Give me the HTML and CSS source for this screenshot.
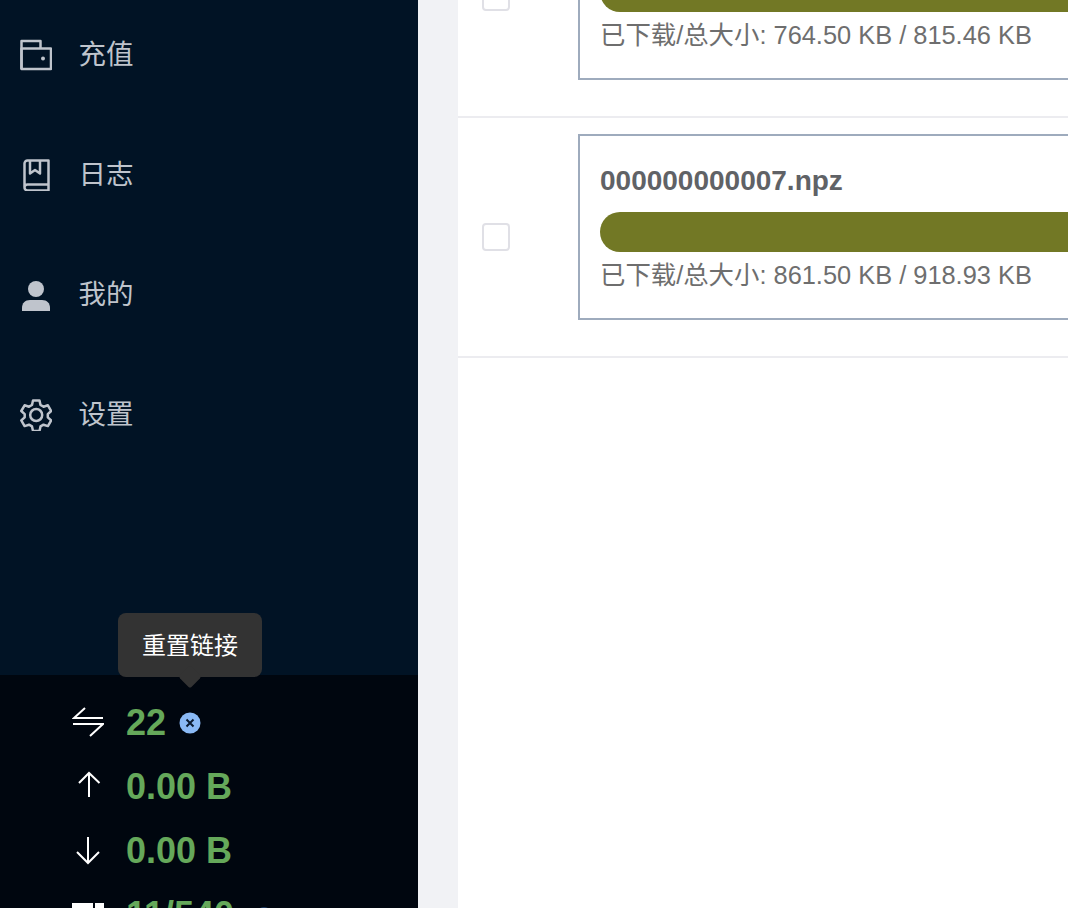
FILE: index.html
```html
<!DOCTYPE html>
<html lang="zh">
<head>
<meta charset="utf-8">
<title>下载</title>
<link rel="stylesheet" href="styles.css">
</head>
<body>
<div class="app">
  <aside class="sidebar">
    <nav class="menu">
      <a class="menu-item">
        <svg class="menu-icon" viewBox="0 0 32 32" fill="none" stroke="currentColor" stroke-width="2.500" stroke-linejoin="round"><path d="M1.500 30V2H20.500V9.500"/><path d="M1.500 9.500H31V30H1.500z"/><circle cx="23" cy="19.500" r="2" fill="currentColor" stroke="none"/></svg>
        <span class="menu-label">充值</span>
      </a>
      <a class="menu-item">
        <svg class="menu-icon" viewBox="0 0 32 32" fill="none" stroke="currentColor" stroke-width="2.500" stroke-linejoin="round"><path d="M4.500 28V4.500a3 3 0 0 1 3-3H28.500V31.500H7.500a3 3 0 0 1-3-3a3 3 0 0 1 3-3H28.500"/><path d="M10 1.500V14.500L15 11l5 3.500V1.500"/></svg>
        <span class="menu-label">日志</span>
      </a>
      <a class="menu-item">
        <svg class="menu-icon" viewBox="0 0 32 32" fill="currentColor"><circle cx="16" cy="10" r="8"/><path d="M2 32v-3c0-5 3-8 8-8h12c5 0 8 3 8 8v3z"/></svg>
        <span class="menu-label">我的</span>
      </a>
      <a class="menu-item">
        <svg class="menu-icon" viewBox="0 0 32 32" fill="none" stroke="currentColor" stroke-width="2.500" stroke-linejoin="round"><path d="M13 1.500h6.500l1 4.500 3 1.700 4.400-1.400 3.300 5.700-3.400 3.100v3.200l3.400 3.100-3.300 5.700-4.400-1.400-3 1.700-1 4.500H13l-1-4.500-3-1.700-4.400 1.400-3.300-5.700 3.400-3.100v-3.200L1.300 12l3.300-5.700L9 7.700l3-1.700z"/><circle cx="16.200" cy="16" r="6"/></svg>
        <span class="menu-label">设置</span>
      </a>
    </nav>
    <section class="stats">
      <div class="stat">
        <svg class="stat-icon" viewBox="0 0 32 32" fill="none" stroke="currentColor" stroke-width="2"><path d="M13 1L2 11H31"/><path d="M1 17H31L18 29"/></svg>
        <span class="stat-value">22</span>
        <span class="reset">
          <svg class="reset-icon" viewBox="0 0 22 22"><circle cx="11" cy="11" r="10.500" fill="#8ab9f5"/><path d="M7.500 7.500l7 7M14.500 7.500l-7 7" stroke="#0a1a30" stroke-width="2" fill="none"/></svg>
          <span class="tooltip">重置链接</span>
        </span>
      </div>
      <div class="stat">
        <svg class="stat-icon" viewBox="0 0 32 32" fill="none" stroke="currentColor" stroke-width="2"><path d="M17 26V2M7 12L17 2L27.500 12"/></svg>
        <span class="stat-value">0.00 B</span>
      </div>
      <div class="stat">
        <svg class="stat-icon" viewBox="0 0 32 32" fill="none" stroke="currentColor" stroke-width="2"><path d="M16 2V28M5 17L16 28L27 17"/></svg>
        <span class="stat-value">0.00 B</span>
      </div>
      <div class="stat">
        <svg class="stat-icon" viewBox="0 0 32 32" fill="currentColor"><path d="M0 4h21v28H0zM23 4h9v28h-9z"/></svg>
        <span class="stat-value">11/540</span>
        <span class="dot"></span>
      </div>
    </section>
  </aside>
  <main class="content">
    <div class="list">
      <div class="row">
        <span class="checkbox"></span>
        <div class="file">
          <div class="file-name">000000000006.npz</div>
          <div class="bar"></div>
          <div class="file-size">已下载/总大小: 764.50 KB / 815.46 KB</div>
        </div>
      </div>
      <div class="row">
        <span class="checkbox"></span>
        <div class="file">
          <div class="file-name">000000000007.npz</div>
          <div class="bar"></div>
          <div class="file-size">已下载/总大小: 861.50 KB / 918.93 KB</div>
        </div>
      </div>
    </div>
  </main>
</div>
</body>
</html>
```
FILE: styles.css
```css
* { box-sizing: border-box; }
html, body { margin: 0; height: 100%; overflow: hidden; }
body { font-family: "Liberation Sans", "Noto Sans CJK SC", sans-serif; }
.app { display: flex; height: 908px; }
.sidebar { width: 418px; flex: none; background: #011325; display: flex; flex-direction: column; overflow: hidden; }
.menu { margin-top: -5px; }
.menu-item { height: 120px; display: flex; align-items: center; gap: 26.500px; padding-left: 20px; color: #bfc4cc; font-size: 27.500px; }
.menu-label { padding-bottom: 6px; }
.menu-icon { width: 32px; height: 32px; flex: none; }
.stats { margin-top: auto; height: 233px; background: #00060f; padding: 16px 0 0 72px; flex: none; }
.stat { height: 64px; display: flex; align-items: center; color: #fff; }
.stat-icon { width: 32px; height: 32px; flex: none; margin-right: 22px; }
.stat-value { font-size: 36px; font-weight: 700; color: #65a85a; }
.reset { position: relative; width: 22px; height: 22px; margin-left: 13px; display: block; }
.reset-icon { display: block; width: 22px; height: 22px; }
.dot { width: 16px; height: 16px; margin-left: 22px; border-radius: 50%; background: #1d3a63; }
.tooltip { position: absolute; left: 50%; bottom: 57px; transform: translateX(-50%); width: 144px; height: 64px; padding-bottom: 3px; border-radius: 8px; background: #333; color: #fff; font-size: 24px; display: flex; align-items: center; justify-content: center; }
.tooltip::after { content: ""; position: absolute; left: 50%; bottom: -8px; width: 16px; height: 16px; margin-left: -8px; background: #333; transform: rotate(45deg); border-radius: 2px; z-index: -1; }
.content { flex: 1; min-width: 0; overflow: hidden; background: #f1f2f5; padding-left: 40px; }
.list { width: 1000px; height: calc(100% + 122px); margin-top: -122px; background: #fff; }
.row { height: 240px; display: flex; align-items: center; padding-left: 24px; border-bottom: 2px solid #ececf0; }
.checkbox { width: 28px; height: 28px; border: 2px solid #e0e0e6; border-radius: 4px; background: #fff; flex: none; margin-right: 68px; }
.file { flex: 1; align-self: flex-start; margin-top: 16px; height: 186px; border: 2px solid #9eabbd; padding: 0 20px; }
.file-name { font-size: 28px; font-weight: 700; color: #606266; line-height: 36px; margin-top: 27px; }
.bar { height: 40px; border-radius: 20px; background: #727825; margin-top: 13px; }
.file-size { font-size: 25.400px; color: #6e6e6e; line-height: 36px; margin-top: 5px; }
```
